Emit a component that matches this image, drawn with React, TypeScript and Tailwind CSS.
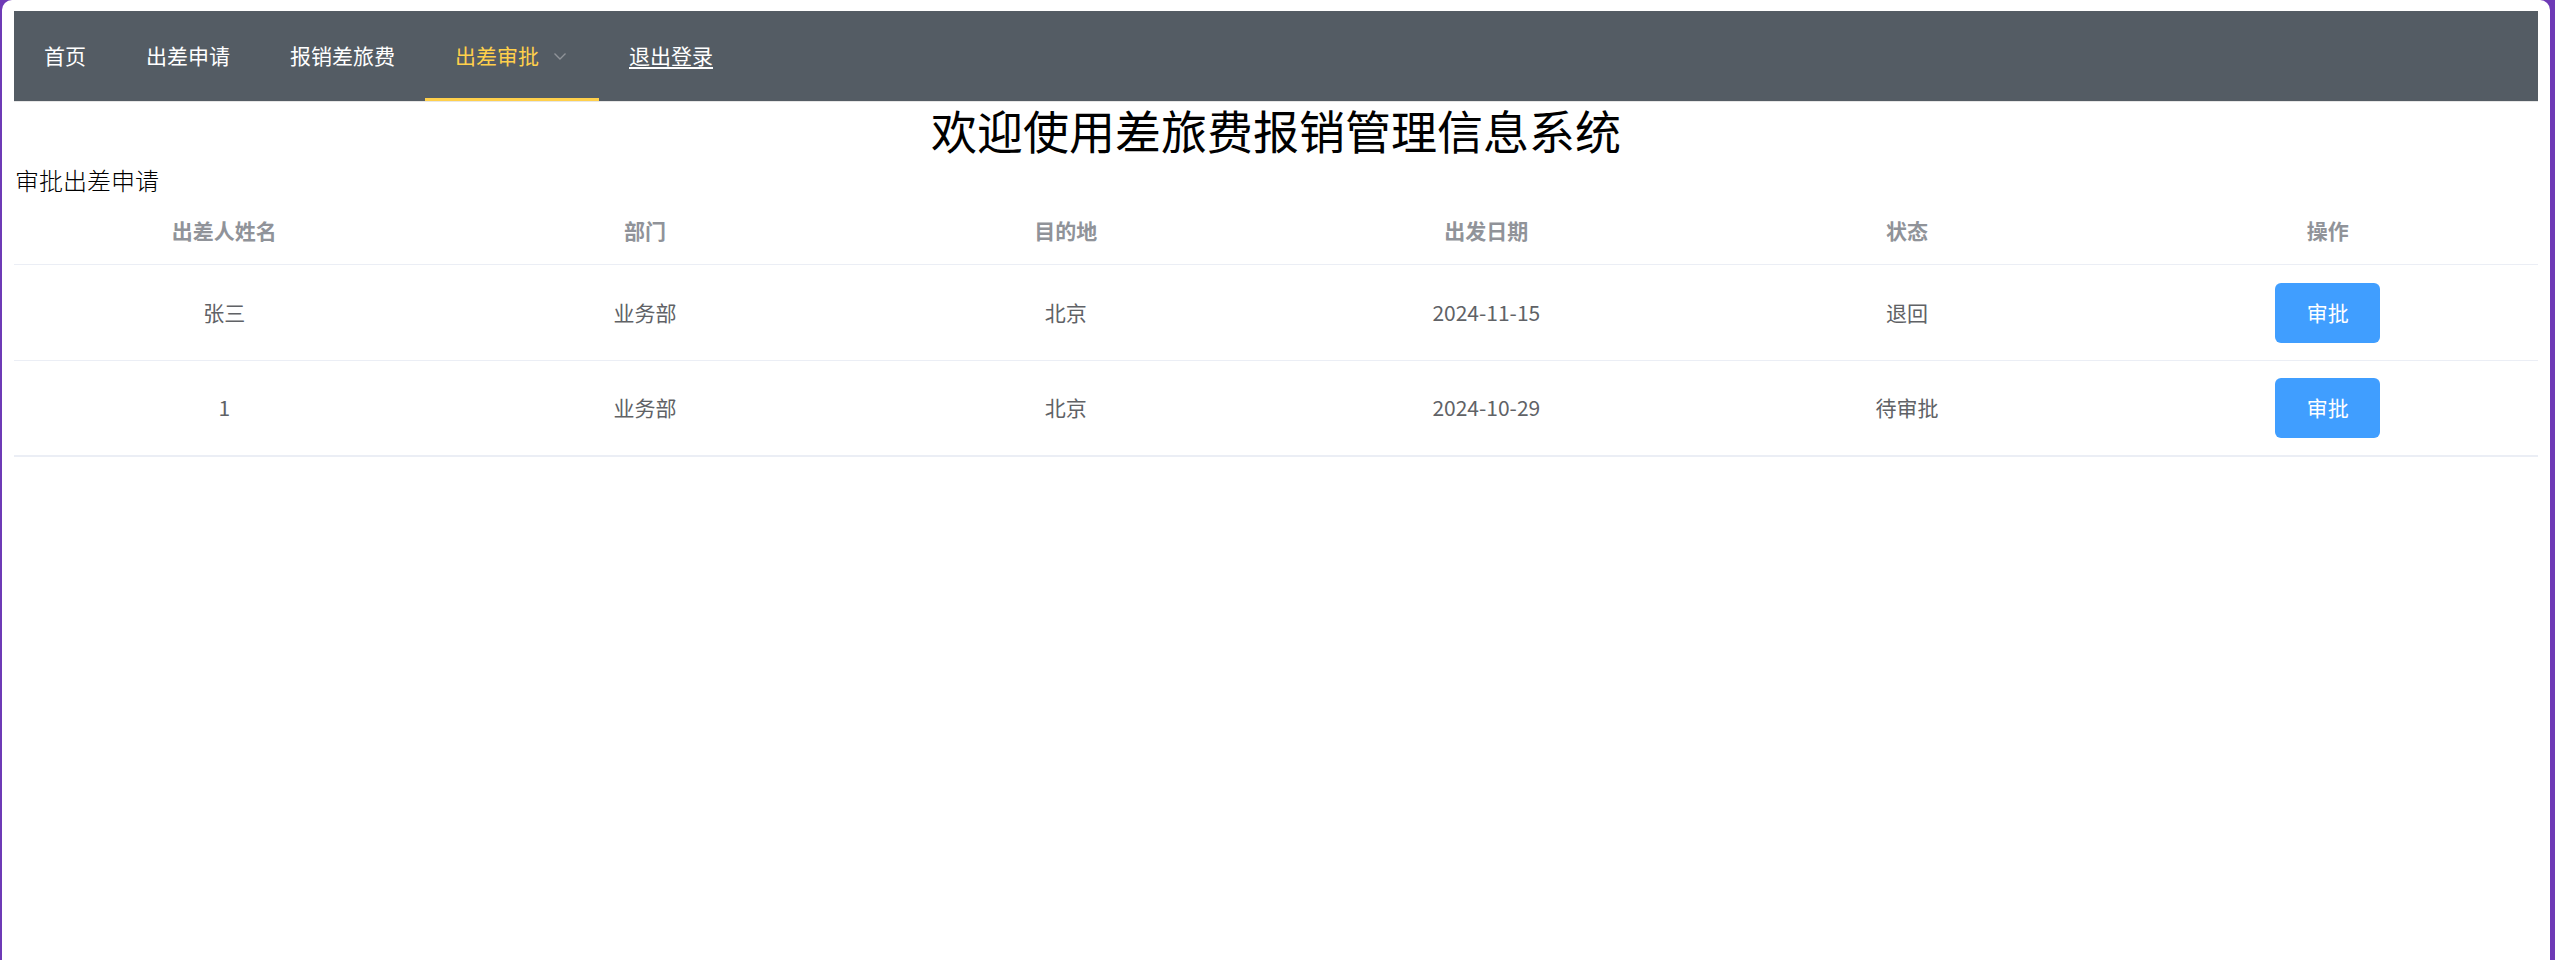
const navItems = [
  { label: "首页" },
  { label: "出差申请" },
  { label: "报销差旅费" },
];

const columns = ["出差人姓名", "部门", "目的地", "出发日期", "状态", "操作"];

const rows = [
  { name: "张三", dept: "业务部", dest: "北京", date: "2024-11-15", status: "退回" },
  { name: "1", dept: "业务部", dest: "北京", date: "2024-10-29", status: "待审批" },
];

function ChevronDown() {
  return (
    <svg width="18" height="18" viewBox="0 0 18 18" fill="none" className="ml-[12px]">
      <path d="M3.5 6.5 L9 12 L14.5 6.5" stroke="#909399" strokeWidth="1.4" />
    </svg>
  );
}

export default function App() {
  return (
    <div className="flex h-[960px] bg-[#6e3ab6] pl-[2px] pr-[5px] font-['Noto_Sans_CJK_SC','Noto_Sans',sans-serif]">
      <div className="flex-1 overflow-hidden rounded-t-[10px] bg-white px-[12px] pt-[11px]">
        {/* top menu */}
        <nav className="flex h-[91px] border-b border-[#e6e6e6] bg-[#545c64] text-[21px] text-white">
          {navItems.map((item) => (
            <div key={item.label} className="flex h-full items-center px-[30px]">
              {item.label}
            </div>
          ))}
          <div className="flex h-full items-center border-b-[3px] border-[#ffd04b] px-[30px] pt-[3px] text-[#ffd04b]">
            出差审批
            <ChevronDown />
          </div>
          <div className="flex h-full items-center px-[30px]">
            <a className="underline underline-offset-[3px]">退出登录</a>
          </div>
        </nav>

        <div className="flex h-[60px] items-center justify-center pt-[4px] font-['Liberation_Serif','Noto_Sans_CJK_SC',serif] text-[46px] leading-none text-black">
          欢迎使用差旅费报销管理信息系统
        </div>
        <div className="flex h-[35px] items-center pl-[1px] text-[24px] font-light leading-none text-black">审批出差申请</div>

        {/* table */}
        <div className="text-[21px]">
          <div className="grid h-[68px] grid-cols-6 items-center border-b border-[#ebeef5] font-bold text-[#909399]">
            {columns.map((c) => (
              <div key={c} className="text-center">
                {c}
              </div>
            ))}
          </div>
          {rows.map((r, i) => (
            <div
              key={i}
              className={`grid h-[96px] grid-cols-6 items-center text-[#606266] ${
                i === rows.length - 1 ? "border-b-2 border-[#ebeef5]" : "border-b border-[#ebeef5]"
              }`}
            >
              <div className="text-center">{r.name}</div>
              <div className="text-center">{r.dept}</div>
              <div className="text-center">{r.dest}</div>
              <div className="text-center">{r.date}</div>
              <div className="text-center">{r.status}</div>
              <div className="flex justify-center">
                <button className="flex h-[60px] w-[105px] items-center justify-center rounded-[6px] bg-[#409eff] text-[21px] text-white">
                  审批
                </button>
              </div>
            </div>
          ))}
        </div>
      </div>
    </div>
  );
}
